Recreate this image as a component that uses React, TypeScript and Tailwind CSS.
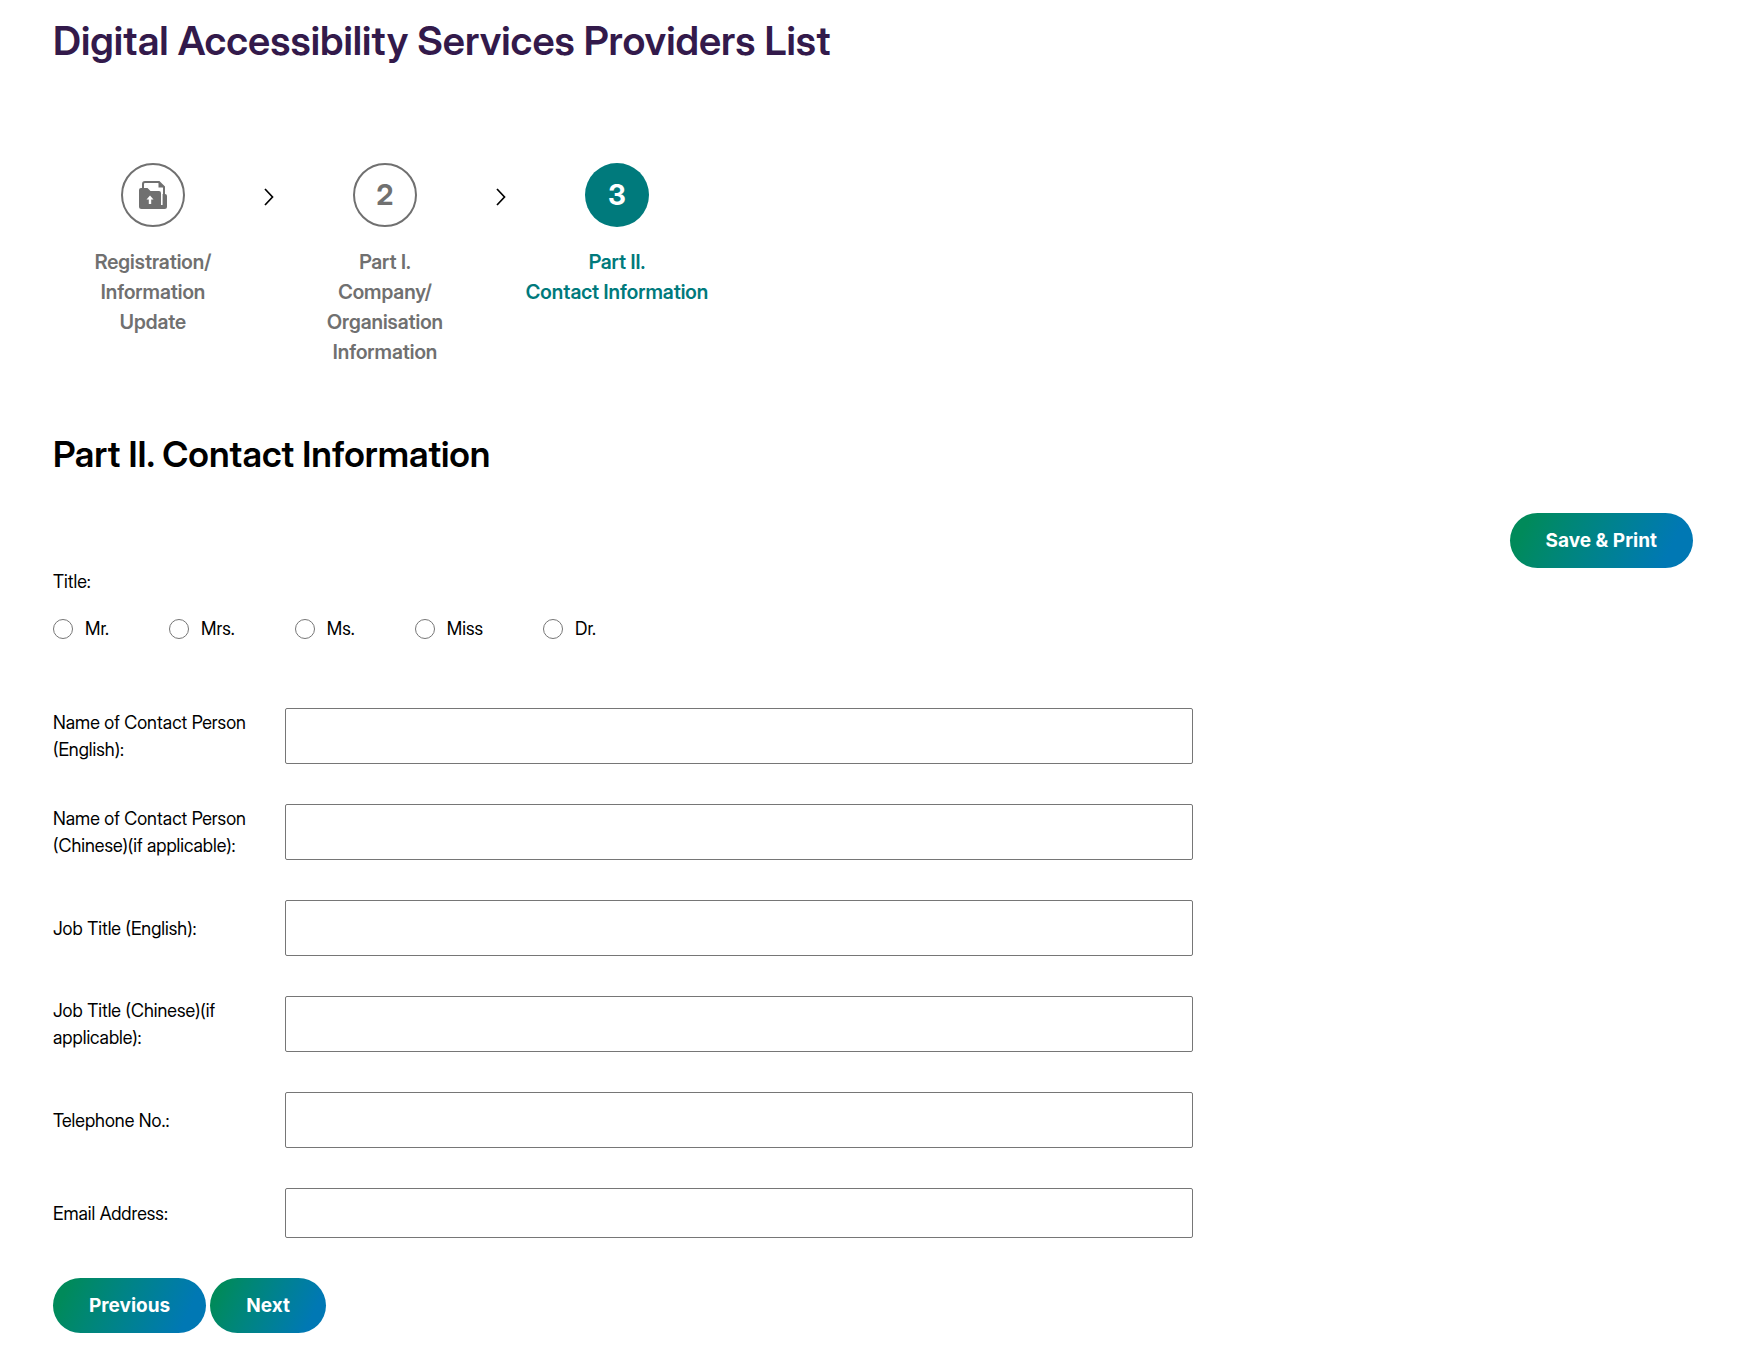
import type { ReactNode } from 'react';

const STEPS = [
  { id: 'registration', badge: <FolderUpIcon />, lines: ['Registration/', 'Information', 'Update'], active: false },
  { id: 'company', badge: '2', lines: ['Part I.', 'Company/', 'Organisation', 'Information'], active: false },
  { id: 'contact', badge: '3', lines: ['Part II.', 'Contact Information'], active: true },
];

const TITLES = ['Mr.', 'Mrs.', 'Ms.', 'Miss', 'Dr.'];

const FIELDS = [
  { name: 'nameEn', type: 'text', label: 'Name of Contact Person (English):', height: 'h-14' },
  { name: 'nameZh', type: 'text', label: 'Name of Contact Person (Chinese)(if applicable):', height: 'h-14' },
  { name: 'jobEn', type: 'text', label: 'Job Title (English):', height: 'h-14' },
  { name: 'jobZh', type: 'text', label: 'Job Title (Chinese)(if applicable):', height: 'h-14' },
  { name: 'phone', type: 'text', label: 'Telephone No.:', height: 'h-14' },
  { name: 'email', type: 'email', label: 'Email Address:', height: 'h-[50px]' },
];

function FolderUpIcon() {
  return (
    <svg width="28" height="28" viewBox="0 0 28 28" aria-hidden="true">
      <path d="M4 9V3a2 2 0 0 1 2-2h14l5 5v8" fill="none" stroke="#707070" strokeWidth="2" />
      <path d="M19.500 0.500v6h6z" fill="#707070" />
      <path
        d="M0 9a2 2 0 0 1 2-2h6.500l3 3H20a2 2 0 0 1 2 2v12h1V13h3a2 2 0 0 1 2 2v10.500a2.500 2.500 0 0 1-2.500 2.500h-23A2.500 2.500 0 0 1 0 25.500z"
        fill="#707070"
      />
      <path d="M23 7v17" stroke="#fff" strokeWidth="1.200" />
      <path d="M11 14.500l3.500 4h-2.300V23H9.800v-4.500H7.500z" fill="#fff" />
    </svg>
  );
}

function StepArrow() {
  return (
    <li aria-hidden="true" className="flex h-[68px] w-8 items-center justify-center">
      <svg width="10" height="18" viewBox="0 0 10 18" fill="none" stroke="#000" strokeWidth="1.700">
        <path d="M1 1l7.500 8L1 17" />
      </svg>
    </li>
  );
}

function Button({ children }: { children: ReactNode }) {
  return (
    <button
      type="button"
      className="h-[55px] cursor-pointer rounded-full bg-linear-115 from-[#008a5a] from-10% to-[#0078b4] to-85% px-9 font-['Inter',sans-serif] text-[19px] font-bold text-white"
    >
      {children}
    </button>
  );
}

export default function App() {
  return (
    <main className="bg-white pt-[11px] pr-[52px] pb-4 pl-[53px] font-['Inter_Display','Inter',sans-serif] text-lg leading-[27px] text-black">
      <h1 className="text-[40px] leading-[60px] font-semibold text-[#331a4b]">
        Digital Accessibility Services Providers List
      </h1>

      {/* Progress */}
      <ol className="mt-[92px] flex items-start">
        {STEPS.flatMap((step, i) => [
          ...(i > 0 ? [<StepArrow key={`${step.id}-arrow`} />] : []),
          <li
            key={step.id}
            aria-current={step.active ? 'step' : undefined}
            className={`flex w-[200px] flex-col items-center text-center text-xl leading-[30px] font-semibold ${
              step.active ? 'text-[#007a7c]' : 'text-[#707070]'
            }`}
          >
            <span
              className={`mb-5 flex size-16 items-center justify-center rounded-full text-[28px] font-bold ${
                step.active ? 'bg-[#007a7c] text-white' : 'border-2 border-[#707070]'
              }`}
            >
              {step.badge}
            </span>
            {step.lines.map((line) => (
              <span key={line} className="whitespace-nowrap">
                {line}
              </span>
            ))}
          </li>,
        ])}
      </ol>

      <h2 className="mt-[60px] text-4xl leading-[54px] font-semibold">Part II. Contact Information</h2>

      <form>
        <div className="mt-8 flex justify-end">
          <Button>Save &amp; Print</Button>
        </div>

        {/* Salutation */}
        <fieldset>
          <legend>Title:</legend>
          <div className="mt-5 flex gap-[60px]">
            {TITLES.map((title) => (
              <label key={title} className="flex items-center gap-3">
                <input
                  type="radio"
                  name="title"
                  value={title}
                  className="size-5 appearance-none rounded-full border border-[#767676] bg-white checked:border-[6px] checked:border-[#007a7c]"
                />
                {title}
              </label>
            ))}
          </div>
        </fieldset>

        {/* Contact details */}
        <div className="mt-[66px] flex max-w-[1140px] flex-col gap-10">
          {FIELDS.map((field) => (
            <div key={field.name} className="flex items-center">
              <label htmlFor={field.name} className="w-[232px] shrink-0 pr-6">
                {field.label}
              </label>
              <input
                id={field.name}
                name={field.name}
                type={field.type}
                className={`min-w-0 flex-1 rounded-xs border border-[#767676] px-4 ${field.height}`}
              />
            </div>
          ))}
        </div>

        <div className="mt-10 flex gap-1">
          <Button>Previous</Button>
          <Button>Next</Button>
        </div>
      </form>
    </main>
  );
}
